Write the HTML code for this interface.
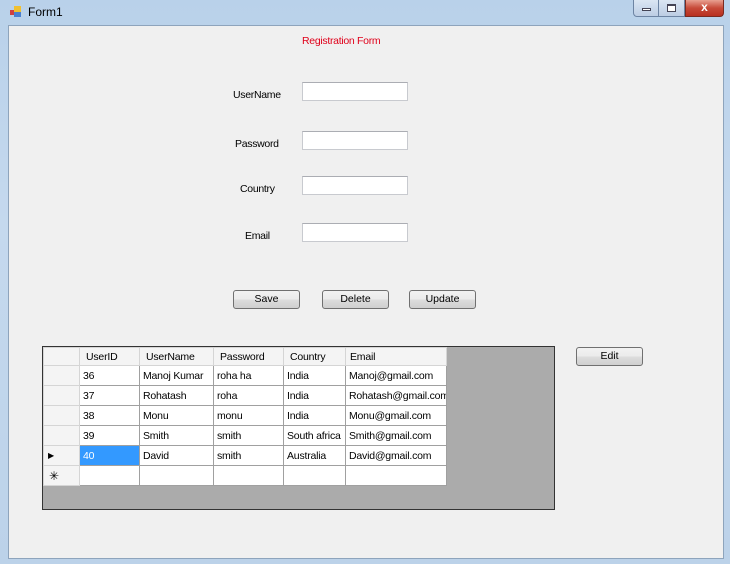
<!DOCTYPE html>
<html><head><style>
*{margin:0;padding:0;box-sizing:border-box}
body{width:730px;height:564px;overflow:hidden;background:linear-gradient(180deg,#b9d1ea,#c5d9ee 40%,#bcd2e9);font-family:"Liberation Sans",sans-serif;font-size:10.5px;color:#000;position:relative}
.abs{position:absolute}
.client{left:8px;top:25px;width:716px;height:534px;background:#f0f0f0;border:1px solid #8ea4bc}
.tb{background:#fff;border:1px solid #c8cacf;border-top-color:#abadb3;width:106px;height:19px}
.btn{height:19px;border:1px solid #707070;border-radius:3px;background:linear-gradient(#f2f2f2,#ebebeb 50%,#dddddd 51%,#cfcfcf);text-align:center;line-height:17px}
table{border-collapse:collapse;position:absolute;left:0;top:0;background:#fff;table-layout:fixed;width:403px}
td{border:1px solid #a0a0a0;height:20px;padding-left:3px;font-size:10.5px;white-space:nowrap;overflow:hidden;letter-spacing:-0.2px}
tr.h td{background:#f4f4f4;border-color:#d5d5d5;height:18px;padding-left:6px}
td.rh{background:#f4f4f4;border-color:#d5d5d5}
</style></head><body>
<div class="abs" style="left:10px;top:6px;width:12px;height:12px">
<div class="abs" style="left:0;top:4px;width:5px;height:5px;background:#d04040"></div>
<div class="abs" style="left:4px;top:0;width:7px;height:7px;background:#f0c030"></div>
<div class="abs" style="left:4px;top:6px;width:7px;height:5px;background:#4a80d0"></div>
</div>
<div class="abs" style="left:28px;top:5px;font-size:12px">Form1</div>
<div class="abs" style="left:633px;top:0;width:26px;height:17px;border:1px solid #6d84a3;border-top:none;border-radius:0 0 0 4px;background:linear-gradient(#dbe6f3,#bccde4)"><div class="abs" style="left:8px;top:8px;width:9px;height:3px;background:#fff;border:1px solid #445"></div></div>
<div class="abs" style="left:659px;top:0;width:26px;height:17px;border:1px solid #6d84a3;border-top:none;border-left:none;background:linear-gradient(#dbe6f3,#bccde4)"><div class="abs" style="left:8px;top:4px;width:9px;height:8px;border:1px solid #445;border-top-width:2px;background:#fff"></div></div>
<div class="abs" style="left:685px;top:0;width:39px;height:17px;border:1px solid #7a2a20;border-top:none;border-radius:0 0 4px 0;background:linear-gradient(#e8a090,#c74a38 50%,#b83020);color:#fff;font-weight:bold;text-align:center;line-height:15px;font-size:12px">x</div>
<div class="abs client">
<div class="abs" style="left:293px;top:9px;color:#e0001a;letter-spacing:-0.3px">Registration Form</div>
<div class="abs" style="left:224px;top:63px;letter-spacing:-0.3px">UserName</div>
<div class="abs" style="left:226px;top:112px;letter-spacing:-0.3px">Password</div>
<div class="abs" style="left:231px;top:157px;letter-spacing:-0.3px">Country</div>
<div class="abs" style="left:236px;top:204px;letter-spacing:-0.3px">Email</div>
<div class="abs tb" style="left:293px;top:56px"></div>
<div class="abs tb" style="left:293px;top:105px"></div>
<div class="abs tb" style="left:293px;top:150px"></div>
<div class="abs tb" style="left:293px;top:197px"></div>
<div class="abs btn" style="left:224px;top:264px;width:67px">Save</div>
<div class="abs btn" style="left:313px;top:264px;width:67px">Delete</div>
<div class="abs btn" style="left:400px;top:264px;width:67px">Update</div>
<div class="abs btn" style="left:567px;top:321px;width:67px">Edit</div>
<div class="abs" style="left:33px;top:320px;width:513px;height:164px;background:#ababab;border:1px solid #333">
<table>
<colgroup><col style="width:36px"><col style="width:60px"><col style="width:74px"><col style="width:70px"><col style="width:62px"><col style="width:101px"></colgroup>
<tr class="h"><td class="rh"></td><td>UserID</td><td>UserName</td><td>Password</td><td>Country</td><td style="padding-left:4px">Email</td></tr>
<tr><td class="rh"></td><td>36</td><td>Manoj Kumar</td><td>roha ha</td><td>India</td><td>Manoj@gmail.com</td></tr>
<tr><td class="rh"></td><td>37</td><td>Rohatash</td><td>roha</td><td>India</td><td>Rohatash@gmail.com</td></tr>
<tr><td class="rh"></td><td>38</td><td>Monu</td><td>monu</td><td>India</td><td>Monu@gmail.com</td></tr>
<tr><td class="rh"></td><td>39</td><td>Smith</td><td>smith</td><td>South africa</td><td>Smith@gmail.com</td></tr>
<tr><td class="rh" style="font-size:8px;padding-left:4px">&#9654;</td><td style="background:#3399ff;color:#fff">40</td><td>David</td><td>smith</td><td>Australia</td><td>David@gmail.com</td></tr>
<tr><td class="rh" style="padding-left:5px;font-size:12px">&#10035;</td><td></td><td></td><td></td><td></td><td></td></tr>
</table>
</div>
</div>
</body></html>
